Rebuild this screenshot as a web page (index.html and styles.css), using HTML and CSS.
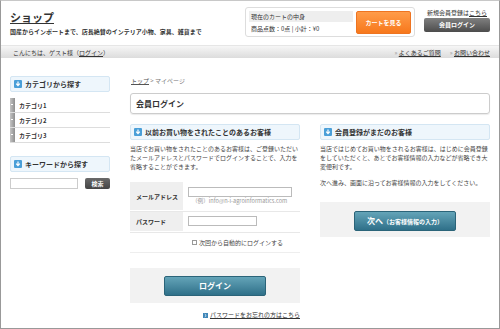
FILE: index.html
```html
<!DOCTYPE html>
<html>
<head>
    <meta charset="UTF-8">
    <title>ショップ - 会員ログイン</title>
    <link rel="stylesheet" href="styles.css">
</head>
<body>
<div class="page">
    <!-- ヘッダー -->
    <div class="header">
        <div class="logo">
            <h1><a href="#">ショップ</a></h1>
            <p>国産からインポートまで、店長絶賛のインテリア小物、家具、雑貨まで</p>
        </div>
        <div class="cart">
            <div class="cart-info">
                <div class="cart-title">現在のカートの中身</div>
                <div class="cart-sum">商品点数：0点 | 小計：¥0</div>
            </div>
            <a class="btn-cart" href="#">カートを見る</a>
        </div>
        <div class="member">
            <div class="regist">新規会員登録は<a href="#">こちら</a></div>
            <a class="btn-member" href="#">会員ログイン</a>
        </div>
    </div>

    <!-- ナビ -->
    <div class="nav">
        <div class="hello">こんにちは、ゲスト様（<a href="#">ログイン</a>）</div>
        <ul class="nav-links">
            <li><em>»</em> <a href="#">よくあるご質問</a></li>
            <li><em>»</em> <a href="#">お問い合わせ</a></li>
        </ul>
    </div>

    <div class="content">
        <!-- サイド -->
        <div class="side">
            <h3 class="ttl">
                <svg viewBox="0 0 8 8"><rect width="8" height="8" rx="1" fill="#4a9fd8"/><path d="M4 1.6v3.6M2.2 3.6 4 5.6l1.8-2" stroke="#fff" stroke-width="1.2" fill="none"/></svg>
                <span>カテゴリから探す</span>
            </h3>
            <ul class="cat">
                <li><i></i>カテゴリ1</li>
                <li><i></i>カテゴリ2</li>
                <li><i></i>カテゴリ3</li>
            </ul>
            <h3 class="ttl ttl-key">
                <svg viewBox="0 0 8 8"><rect width="8" height="8" rx="1" fill="#4a9fd8"/><path d="M4 1.6v3.6M2.2 3.6 4 5.6l1.8-2" stroke="#fff" stroke-width="1.2" fill="none"/></svg>
                <span>キーワードから探す</span>
            </h3>
            <div class="search">
                <input type="text" class="search-input">
                <a class="btn-search" href="#">検索</a>
            </div>
        </div>

        <!-- メイン -->
        <div class="main">
            <div class="bread"><a href="#">トップ</a> &gt; マイページ</div>
            <h2 class="page-ttl">会員ログイン</h2>

            <div class="cols">
                <div class="col">
                    <h3 class="ttl">
                        <svg viewBox="0 0 8 8"><rect width="8" height="8" rx="1" fill="#4a9fd8"/><path d="M4 1.6v3.6M2.2 3.6 4 5.6l1.8-2" stroke="#fff" stroke-width="1.2" fill="none"/></svg>
                        <span>以前お買い物をされたことのあるお客様</span>
                    </h3>
                    <p class="txt">当店でお買い物をされたことのあるお客様は、ご登録いただいたメールアドレスとパスワードでログインすることで、入力を省略することができます。</p>

                    <div class="form">
                        <div class="row row-mail">
                            <div class="label">メールアドレス</div>
                            <div class="value">
                                <input type="text" class="ipt-mail">
                                <div class="hint">（例）info@n-i-agroinformatics.com</div>
                            </div>
                        </div>
                        <div class="row row-pass">
                            <div class="label">パスワード</div>
                            <div class="value">
                                <input type="password" class="ipt-pass">
                            </div>
                        </div>
                        <div class="auto"><span class="check"></span>次回から自動的にログインする</div>
                    </div>

                    <div class="btn-area">
                        <a class="btn-blue" href="#">ログイン</a>
                    </div>
                    <div class="forget">
                        <svg viewBox="0 0 5 5"><rect width="5" height="5" fill="#3f86b8"/><path d="M1.8 1.2 3.2 2.5 1.8 3.8" stroke="#fff" stroke-width=".8" fill="none"/></svg>
                        <a href="#">パスワードをお忘れの方はこちら</a>
                    </div>
                </div>

                <div class="col">
                    <h3 class="ttl">
                        <svg viewBox="0 0 8 8"><rect width="8" height="8" rx="1" fill="#4a9fd8"/><path d="M4 1.6v3.6M2.2 3.6 4 5.6l1.8-2" stroke="#fff" stroke-width="1.2" fill="none"/></svg>
                        <span>会員登録がまだのお客様</span>
                    </h3>
                    <p class="txt">当店ではじめてお買い物をされるお客様は、はじめに会員登録をしていただくと、あとでお客様情報の入力などが省略でき大変便利です。</p>
                    <p class="txt txt-next">次へ進み、画面に沿ってお客様情報の入力をしてください。</p>
                    <div class="btn-area btn-area-r">
                        <a class="btn-blue" href="#">次へ<small>（お客様情報の入力）</small></a>
                    </div>
                </div>
            </div>
        </div>
    </div>
</div>
</body>
</html>
```

FILE: styles.css
```css
* {
    margin: 0;
    padding: 0;
    box-sizing: border-box;
    font-family: "Noto Sans CJK JP", "Liberation Sans", sans-serif;
}

body {
    background: #fff;
    color: #333;
}

ul, li {
    list-style: none;
}

a {
    color: #333;
}

.page {
    width: 500px;
    height: 329px;
    border: 1px solid #999;
    border-top-color: #c8c8c8;
    overflow: hidden;
}

/* header */
.header {
    display: flex;
    height: 44px;
    padding: 0 9px;
}

.logo {
    flex: 1;
    padding-top: 9px;
}

.logo h1 {
    font-size: 11px;
    line-height: 14px;
}

.logo h1 a {
    color: #333;
}

.logo p {
    margin-top: 4px;
    font-size: 6px;
    line-height: 8px;
    font-weight: bold;
}

.cart {
    display: flex;
    width: 170px;
    height: 30px;
    margin-top: 6px;
    padding: 3px;
    border: 1px solid #ddd;
    border-radius: 3px;
}

.cart-info {
    flex: 1;
    font-size: 6px;
}

.cart-title {
    height: 11px;
    line-height: 11px;
    padding-left: 2px;
    background: #eee;
}

.cart-sum {
    margin-top: 1px;
    line-height: 12px;
    padding-left: 2px;
}

.btn-cart {
    display: block;
    width: 55px;
    height: 23px;
    line-height: 21px;
    margin-left: 3px;
    text-align: center;
    font-size: 6px;
    font-weight: bold;
    color: #fff;
    text-decoration: none;
    background: linear-gradient(#ff9c4a, #f7781c);
    border: 1px solid #ee7421;
    border-radius: 2px;
}

.member {
    width: 66px;
    margin-left: 9px;
    padding-top: 8px;
    text-align: center;
}

.regist {
    font-size: 6px;
    line-height: 7px;
}

.btn-member {
    display: block;
    height: 14px;
    line-height: 14px;
    margin-top: 2px;
    font-size: 6px;
    font-weight: bold;
    color: #fff;
    text-decoration: none;
    background: linear-gradient(#808080, #4c4c4c);
    border-radius: 2px;
}

/* nav */
.nav {
    display: flex;
    justify-content: space-between;
    height: 13px;
    padding: 0 9px 0 12px;
    font-size: 6px;
    line-height: 13px;
    background: linear-gradient(#f6f6f6, #dcdcdc);
    border-top: 1px solid #e6e6e6;
}

.nav-links {
    display: flex;
}

.nav-links li {
    margin-left: 9px;
}

.nav-links em {
    font-style: normal;
    color: #999;
}

/* content */
.content {
    display: flex;
    padding: 18px 9px 0;
}

.side {
    width: 100px;
    margin-right: 20px;
}

.main {
    width: 360px;
}

.ttl {
    display: flex;
    align-items: center;
    height: 16px;
    padding-left: 3px;
    font-size: 7px;
    font-weight: bold;
    color: #333;
    background: #eef6fc;
    border: 1px solid #d4e6f3;
    border-radius: 2px;
}

.ttl svg {
    width: 8px;
    height: 8px;
    margin-right: 3px;
}

.cat {
    margin-top: 6px;
}

.cat li {
    display: flex;
    align-items: center;
    height: 15px;
    font-size: 6px;
    font-weight: bold;
    border-bottom: 1px solid #ddd;
}

.cat i {
    position: relative;
    width: 5px;
    height: 14px;
    margin-right: 4px;
    background: linear-gradient(90deg, #c4c4c4, #8e8e8e);
}

.cat i:after {
    content: "";
    position: absolute;
    top: 6px;
    left: 1px;
    width: 2px;
    height: 1px;
    background: #fff;
}

.ttl-key {
    margin-top: 13px;
}

.search {
    display: flex;
    margin-top: 6px;
}

.search-input {
    width: 68px;
    height: 11px;
    border: 1px solid #ccc;
}

.btn-search {
    display: block;
    width: 25px;
    height: 11px;
    line-height: 11px;
    margin-left: 7px;
    text-align: center;
    font-size: 6px;
    font-weight: bold;
    color: #fff;
    text-decoration: none;
    background: linear-gradient(#6a6a6a, #444);
    border-radius: 2px;
}

/* main */
.bread {
    font-size: 6px;
    line-height: 10px;
    color: #777;
    padding-left: 1px;
}

.bread a {
    color: #555;
}

.page-ttl {
    height: 21px;
    margin-top: 7px;
    padding-left: 5px;
    font-size: 8px;
    line-height: 19px;
    border: 1px solid #ccc;
    border-radius: 3px;
    box-shadow: 0 1px 1px rgba(0, 0, 0, .08);
}

.cols {
    display: flex;
    margin-top: 10px;
}

.col {
    width: 170px;
    margin-right: 20px;
}

.col:last-child {
    margin-right: 0;
}

.txt {
    margin-top: 4px;
    font-size: 6px;
    line-height: 9px;
    color: #444;
}

.txt-next {
    margin-top: 7px;
}

.form {
    margin-top: 11px;
}

.row {
    display: flex;
    border-bottom: 1px solid #e8e8e8;
}

.row-mail {
    height: 30px;
}

.row-pass {
    height: 21px;
}

.label {
    display: flex;
    align-items: center;
    width: 53px;
    padding-left: 6px;
    font-size: 6px;
    font-weight: bold;
    background: #efefef;
    border-bottom: 1px solid #fff;
}

.value {
    padding: 5px 0 0 5px;
}

.row-pass .value {
    padding-top: 4px;
}

.ipt-mail, .ipt-pass {
    display: block;
    height: 10px;
    border: 1px solid #bbb;
}

.ipt-mail {
    width: 104px;
}

.ipt-pass {
    width: 69px;
}

.hint {
    margin-top: 1px;
    padding-left: 4px;
    font-size: 5.6px;
    line-height: 7px;
    color: #999;
}

.auto {
    display: flex;
    align-items: center;
    height: 20px;
    padding-left: 62px;
    font-size: 6px;
    color: #444;
    border-bottom: 1px solid #eee;
}

.check {
    width: 5px;
    height: 5px;
    margin-right: 2px;
    border: 1px solid #999;
    background: #fff;
}

.btn-area {
    margin-top: 15px;
    padding: 8px 0 7px;
    background: #f2f2f2;
}

.btn-area-r {
    padding: 9px 0 6px;
}

.btn-blue {
    display: block;
    width: 102px;
    height: 20px;
    line-height: 18px;
    margin: 0 auto;
    text-align: center;
    font-size: 8px;
    font-weight: bold;
    color: #fff;
    text-decoration: none;
    background: linear-gradient(#64a4b8, #2f7089);
    border: 1px solid #2b6479;
    border-radius: 2px;
}

.btn-blue small {
    font-size: 6px;
}

.forget {
    display: flex;
    align-items: center;
    justify-content: flex-end;
    margin-top: 8px;
    font-size: 6px;
    line-height: 8px;
}

.forget svg {
    width: 5px;
    height: 5px;
    margin-right: 2px;
}
```
